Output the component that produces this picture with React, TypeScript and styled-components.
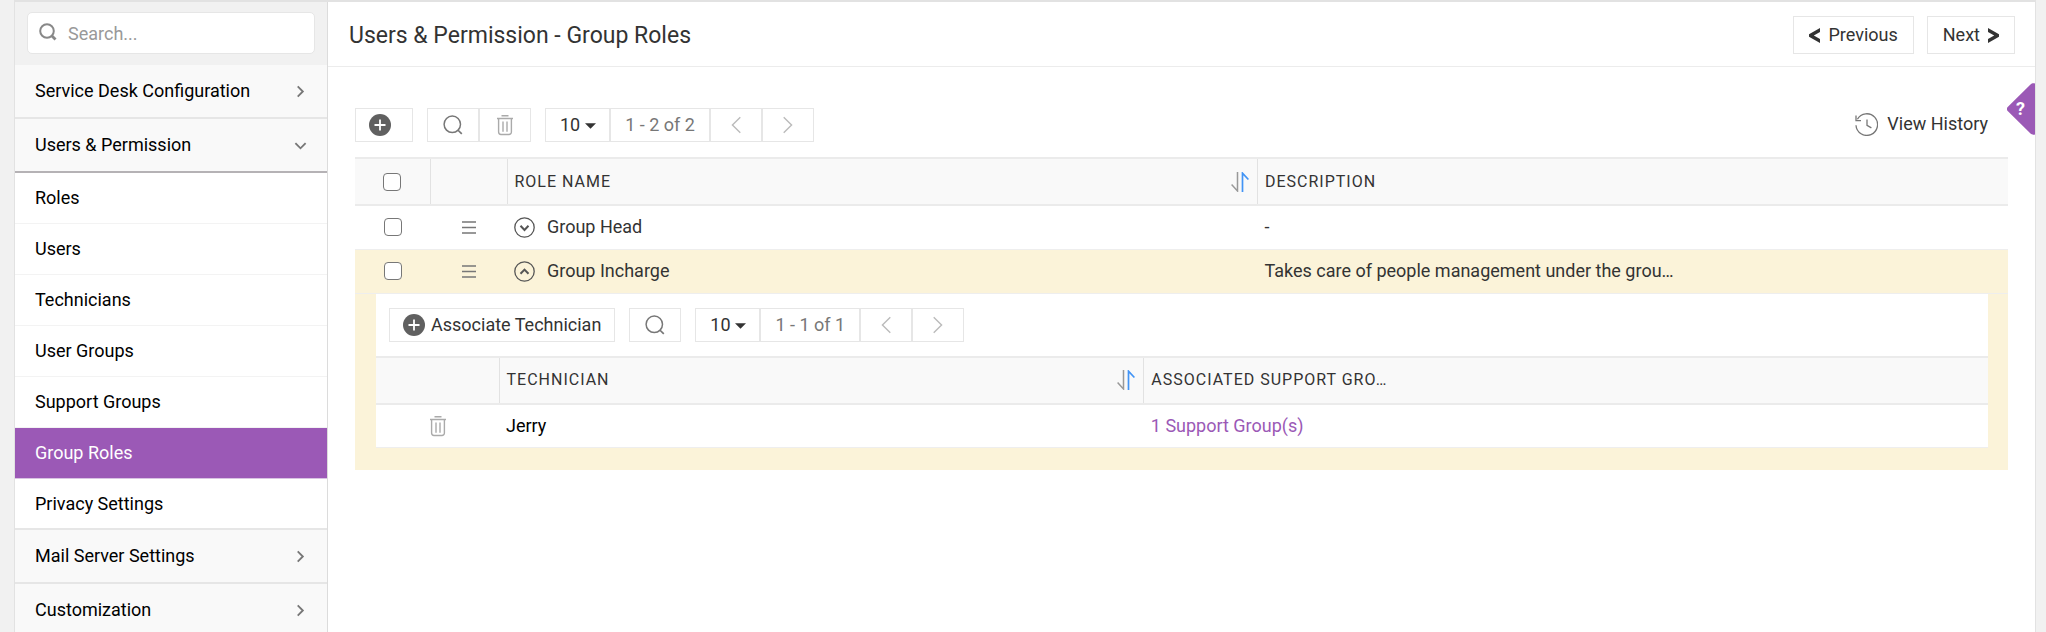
import React from "react";
import styled, { createGlobalStyle, css } from "styled-components";

const color = {
  gutter: "#f1f1f1",
  line: "#e6e6e6",
  soft: "#f9f9f9",
  text: "#333",
  muted: "#777",
  accent: "#9b59b6",
  highlight: "#fbf3d9",
};

const GlobalStyle = createGlobalStyle`
  *, *::before, *::after { box-sizing: border-box; }
  body {
    margin: 0;
    overflow: hidden;
    background: ${color.gutter};
    color: ${color.text};
    font-family: Roboto, "Liberation Sans", sans-serif;
    font-size: 18px;
    line-height: 20px;
    -webkit-font-smoothing: antialiased;
  }
  button, input, select { font: inherit; color: inherit; }
  svg { display: block; flex: none; }
  a { text-decoration: none; }
`;

const Shell = styled.div`
  position: relative;
  display: flex;
  height: 100vh;
  margin: 0 10px 0 14px;
  border: solid #e2e2e2;
  border-width: 2px 1px 0;
  background: #fff;
`;

/* ---------- sidebar ---------- */

const Sidebar = styled.nav`
  flex: none;
  width: 313px;
  overflow: hidden;
  border-right: 1px solid #dcdcdc;
`;

const SearchArea = styled.div`
  padding: 10px 12px 11px;
  background: ${color.gutter};
`;

const SearchBox = styled.label`
  display: flex;
  align-items: center;
  gap: 11px;
  height: 42px;
  padding: 0 11px;
  border: 1px solid ${color.line};
  border-radius: 5px;
  background: #fff;
`;

const SearchInput = styled.input`
  flex: 1;
  min-width: 0;
  padding: 2px 0 0;
  border: 0;
  outline: 0;
  background: none;
  &::placeholder { color: #999; opacity: 1; }
`;

const GroupButton = styled.button<{ $open?: boolean }>`
  display: flex;
  align-items: center;
  justify-content: space-between;
  width: 100%;
  height: 54px;
  padding: 0 20px;
  border: 0;
  border-bottom: 2px solid ${(p) => (p.$open ? "#b5b2b5" : color.line)};
  background: ${color.soft};
  color: #000;
  text-align: left;
`;

const SubList = styled.ul`
  margin: 0;
  padding: 0;
  list-style: none;
`;

const SubLink = styled.a<{ $active?: boolean }>`
  display: flex;
  align-items: center;
  height: 51px;
  padding: 0 20px;
  border-bottom: 1px solid #f3f3f3;
  color: #000;
  ${(p) =>
    p.$active &&
    css`
      border-color: #d9c3e3;
      background: ${color.accent};
      color: #fff;
    `}
  li:last-child > & { border-bottom: 2px solid ${color.line}; }
`;

/* ---------- main ---------- */

const Main = styled.main`
  flex: 1;
  min-width: 0;
`;

const Header = styled.header`
  display: flex;
  align-items: center;
  justify-content: space-between;
  height: 65px;
  padding: 2px 20px 0 21px;
  border-bottom: 1px solid #ececec;
`;

const Title = styled.h1`
  margin: 0;
  padding-top: 2px;
  font-size: 23px;
  line-height: 28px;
  font-weight: 400;
`;

const HeaderActions = styled.div`
  display: flex;
  gap: 13px;
`;

const NavButton = styled.button`
  display: flex;
  align-items: center;
  gap: 8px;
  height: 38px;
  padding: 0 15px;
  border: 1px solid ${color.line};
  background: #fff;
`;

const Content = styled.div`
  padding: 41px 27px 0 27px;
`;

const Toolbar = styled.div<{ $inset?: boolean }>`
  display: flex;
  align-items: center;
  gap: 14px;
  padding: ${(p) => (p.$inset ? "14px 13px" : "0 0 15px")};
`;

const Spacer = styled.div`
  flex: 1;
`;

const ToolGroup = styled.div`
  display: flex;
  & > * + * { border-left-width: 0; }
`;

const cell = css`
  height: 34px;
  border: 1px solid ${color.line};
  background: #fff;
`;

const ToolButton = styled.button<{ $faint?: boolean }>`
  ${cell}
  display: flex;
  align-items: center;
  justify-content: center;
  width: 52px;
  padding: 0;
  color: ${(p) => (p.$faint ? "#bbb" : "#666")};
`;

const AddButton = styled.button`
  ${cell}
  display: flex;
  align-items: center;
  gap: 6px;
  min-width: 58px;
  padding: 0 13px;
`;

const PageSize = styled.div`
  ${cell}
  display: grid;
  align-items: center;
  width: 65px;
  & > * { grid-area: 1 / 1; }
  & > svg { justify-self: end; margin: 2px 13px 0 0; pointer-events: none; }
`;

const PageSelect = styled.select`
  appearance: none;
  width: 100%;
  height: 32px;
  padding: 0 14px;
  border: 0;
  outline: 0;
  background: none;
`;

const PageRange = styled.div`
  ${cell}
  display: flex;
  align-items: center;
  justify-content: center;
  width: 100px;
  color: ${color.muted};
`;

const HistoryButton = styled.button`
  display: flex;
  align-items: center;
  gap: 9px;
  margin-right: 20px;
  padding: 0 0 2px;
  border: 0;
  background: none;
`;

const Table = styled.table`
  width: 100%;
  table-layout: fixed;
  border-collapse: collapse;
`;

const Th = styled.th`
  height: 47px;
  padding: 0 8px 0 7px;
  border-top: 2px solid #ebebeb;
  border-bottom: 2px solid #ebebeb;
  background: ${color.soft};
  font-size: 16px;
  font-weight: 400;
  letter-spacing: 1px;
  text-align: left;
  text-transform: uppercase;
  & + & { border-left: 1px solid #e2e2e2; }
`;

const SortHead = styled.div`
  display: flex;
  align-items: center;
  justify-content: space-between;
`;

const Row = styled.tr<{ $selected?: boolean }>`
  background: ${(p) => (p.$selected ? color.highlight : "#fff")};
`;

const Td = styled.td<{ $strong?: boolean }>`
  height: 44px;
  padding: 0 7px;
  border-bottom: 1px solid #eee;
  ${(p) => p.$strong && css`color: #000;`}
`;

const Centered = styled.div`
  display: flex;
  align-items: center;
  justify-content: center;
  color: #888;
`;

const Check = styled.input`
  appearance: none;
  width: 18px;
  height: 18px;
  margin: 0;
  border: 1px solid #777;
  border-radius: 4px;
  background: #fff;
`;

const RoleName = styled.div`
  display: flex;
  align-items: center;
  gap: 12px;
`;

const IconButton = styled.button`
  display: flex;
  padding: 0;
  border: 0;
  background: none;
`;

const NestedCell = styled.td`
  padding: 0 20px 22px 21px;
`;

const NestedPanel = styled.section`
  background: #fff;
`;

const AccentLink = styled.a`
  color: ${color.accent};
`;

const HelpTab = styled.button`
  position: absolute;
  top: 81px;
  right: 0;
  padding: 0;
  border: 0;
  background: none;
`;

const HelpFace = styled.span`
  display: grid;
  align-items: center;
  & > * { grid-area: 1 / 1; }
`;

const HelpMark = styled.span`
  padding: 0 0 0 9px;
  color: #fff;
  font-size: 18px;
  font-weight: 700;
  text-align: left;
`;

/* ---------- icons ---------- */

const Chevron = ({ dir = "right", size = 13, stroke = 2 }: { dir?: "right" | "left" | "down"; size?: number; stroke?: number }) => {
  const d = { right: "M4 1.5 9.5 7 4 12.5", left: "M10 1.5 4.5 7 10 12.5", down: "M1.5 4.5 7 10 12.5 4.5" }[dir];
  return (
    <svg width={size} height={size} viewBox="0 0 14 14" fill="none" stroke="currentColor" strokeWidth={stroke} aria-hidden>
      <path d={d} />
    </svg>
  );
};

const SideChevron = styled.span`
  display: flex;
  color: #777;
`;

const FieldSearchIcon = () => (
  <svg width="18" height="20" viewBox="0 0 18 20" fill="none" stroke="#888" aria-hidden>
    <circle cx="8" cy="8" r="6.8" strokeWidth="2" />
    <path d="m12.5 12.5 4 4" strokeWidth="2.8" />
  </svg>
);

const SearchIcon = () => (
  <svg width="20" height="20" viewBox="0 0 20 20" fill="none" stroke="#777" strokeWidth="1.5" aria-hidden>
    <circle cx="9.3" cy="9.3" r="8.2" />
    <path d="m14.8 15 4 3.8" strokeWidth="1.7" />
  </svg>
);

const TrashIcon = () => (
  <svg width="18" height="22" viewBox="0 0 18 22" fill="none" stroke="#aaa" strokeWidth="1.4" aria-hidden>
    <path d="M5.5 1.7h7M1 4.5h16M2.6 4.5v13.6a2.4 2.4 0 0 0 2.4 2.4h8a2.4 2.4 0 0 0 2.4-2.4V4.5M7 7.5v10.3M11 7.5v10.3" />
  </svg>
);

const PlusIcon = () => (
  <svg width="22" height="22" viewBox="0 0 22 22" aria-hidden>
    <circle cx="11" cy="11" r="11" fill="#606060" />
    <path d="M11 5.5v11M5.5 11h11" stroke="#fff" strokeWidth="1.8" />
  </svg>
);

const CaretIcon = () => (
  <svg width="11" height="6" viewBox="0 0 11 6" aria-hidden>
    <path d="M0 .3h11L5.5 5.8z" fill="#333" />
  </svg>
);

const SortIcon = () => (
  <svg width="18" height="20" viewBox="0 0 18 20" fill="none" aria-hidden>
    <path d="M6.5 0v19L.6 12.6" stroke="#999" strokeWidth="1.5" />
    <path d="M11.5 20V1.2l5.9 6.3" stroke="#4294f5" strokeWidth="1.7" />
  </svg>
);

const DragIcon = () => (
  <svg width="14" height="13" viewBox="0 0 14 13" stroke="#777" strokeWidth="1.3" aria-hidden>
    <path d="M0 1h14M0 6.5h14M0 12h14" />
  </svg>
);

const ExpandIcon = ({ open }: { open?: boolean }) => (
  <svg width="21" height="21" viewBox="0 0 21 21" fill="none" stroke="#555" aria-hidden>
    <circle cx="10.5" cy="10.5" r="9.7" strokeWidth="1.3" />
    <path d={open ? "m6.5 12.8 4-4.2 4 4.2" : "m6.5 8.8 4 4.2 4-4.2"} strokeWidth="2" />
  </svg>
);

const HistoryIcon = () => (
  <svg width="23" height="24" viewBox="0 0 23 24" fill="none" stroke="#777" strokeWidth="1.3" aria-hidden>
    <path d="M2.4 7.2A10.8 10.8 0 1 1 1 13.2" />
    <path d="M1 3.6v5h5M12 7.5v5.8l4.4 2.6" />
  </svg>
);

const BoldArrow = ({ left }: { left?: boolean }) => (
  <svg width="11" height="15" viewBox="0 0 11 15" fill="#333" aria-hidden>
    <path d={left ? "M11 0v4L4.8 7.5 11 11v4L0 8.8V6.2z" : "M0 0v4l6.2 3.5L0 11v4l11-6.2V6.2z"} />
  </svg>
);

const HelpShape = () => (
  <svg width="28" height="52" viewBox="0 0 28 52" aria-hidden>
    <path d="M28 .5v51c-2 .5-3.4 0-4.5-1L1.2 28.6a3.6 3.6 0 0 1 0-5.2L23.5 1.5C24.6.5 26 0 28 .5z" fill={color.accent} />
  </svg>
);

/* ---------- page ---------- */

const subItems = ["Roles", "Users", "Technicians", "User Groups", "Support Groups", "Group Roles", "Privacy Settings"];

const NavGroup = ({ label, open }: { label: string; open?: boolean }) => (
  <GroupButton type="button" $open={open} aria-expanded={!!open}>
    {label}
    <SideChevron>
      <Chevron dir={open ? "down" : "right"} />
    </SideChevron>
  </GroupButton>
);

const Pager = ({ range }: { range: string }) => (
  <ToolGroup>
    <PageSize>
      <PageSelect aria-label="Rows per page" defaultValue="10">
        <option>10</option>
        <option>25</option>
        <option>50</option>
      </PageSelect>
      <CaretIcon />
    </PageSize>
    <PageRange>{range}</PageRange>
    <ToolButton type="button" $faint aria-label="Previous page">
      <Chevron dir="left" size={20} stroke={1} />
    </ToolButton>
    <ToolButton type="button" $faint aria-label="Next page">
      <Chevron size={20} stroke={1} />
    </ToolButton>
  </ToolGroup>
);

const RoleRow = ({ name, description, open }: { name: string; description: string; open?: boolean }) => (
  <Row $selected={open}>
    <Td>
      <Centered>
        <Check type="checkbox" aria-label={`Select ${name}`} />
      </Centered>
    </Td>
    <Td>
      <Centered>
        <DragIcon />
      </Centered>
    </Td>
    <Td>
      <RoleName>
        <IconButton type="button" aria-expanded={!!open} aria-label={`Technicians in ${name}`}>
          <ExpandIcon open={open} />
        </IconButton>
        {name}
      </RoleName>
    </Td>
    <Td>{description}</Td>
  </Row>
);

const TechnicianPanel = () => (
  <NestedPanel>
    <Toolbar $inset>
      <AddButton type="button">
        <PlusIcon />
        Associate Technician
      </AddButton>
      <ToolButton type="button" aria-label="Search technicians">
        <SearchIcon />
      </ToolButton>
      <Pager range="1 - 1 of 1" />
    </Toolbar>
    <Table>
      <colgroup>
        <col style={{ width: 123 }} />
        <col style={{ width: "40%" }} />
        <col />
      </colgroup>
      <thead>
        <tr>
          <Th aria-label="Actions" />
          <Th>
            <SortHead>
              Technician
              <SortIcon />
            </SortHead>
          </Th>
          <Th>Associated Support Gro…</Th>
        </tr>
      </thead>
      <tbody>
        <Row>
          <Td>
            <Centered>
              <IconButton type="button" aria-label="Remove Jerry">
                <TrashIcon />
              </IconButton>
            </Centered>
          </Td>
          <Td $strong>Jerry</Td>
          <Td>
            <AccentLink href="#support-groups">1 Support Group(s)</AccentLink>
          </Td>
        </Row>
      </tbody>
    </Table>
  </NestedPanel>
);

export default function App() {
  return (
    <>
      <GlobalStyle />
      <Shell>
        <Sidebar>
          <SearchArea>
            <SearchBox>
              <FieldSearchIcon />
              <SearchInput type="text" placeholder="Search..." aria-label="Search settings" />
            </SearchBox>
          </SearchArea>
          <NavGroup label="Service Desk Configuration" />
          <NavGroup label="Users & Permission" open />
          <SubList>
            {subItems.map((item) => (
              <li key={item}>
                <SubLink href="#" $active={item === "Group Roles"}>
                  {item}
                </SubLink>
              </li>
            ))}
          </SubList>
          <NavGroup label="Mail Server Settings" />
          <NavGroup label="Customization" />
        </Sidebar>
        <Main>
          <Header>
            <Title>Users &amp; Permission - Group Roles</Title>
            <HeaderActions>
              <NavButton type="button">
                <BoldArrow left />
                Previous
              </NavButton>
              <NavButton type="button">
                Next
                <BoldArrow />
              </NavButton>
            </HeaderActions>
          </Header>
          <Content>
            <Toolbar>
              <AddButton type="button" aria-label="Add role">
                <PlusIcon />
              </AddButton>
              <ToolGroup>
                <ToolButton type="button" aria-label="Search roles">
                  <SearchIcon />
                </ToolButton>
                <ToolButton type="button" aria-label="Delete roles">
                  <TrashIcon />
                </ToolButton>
              </ToolGroup>
              <Pager range="1 - 2 of 2" />
              <Spacer />
              <HistoryButton type="button">
                <HistoryIcon />
                View History
              </HistoryButton>
            </Toolbar>
            <Table>
              <colgroup>
                <col style={{ width: 75 }} />
                <col style={{ width: 77 }} />
                <col />
                <col />
              </colgroup>
              <thead>
                <tr>
                  <Th>
                    <Centered>
                      <Check type="checkbox" aria-label="Select all roles" />
                    </Centered>
                  </Th>
                  <Th aria-label="Reorder" />
                  <Th>
                    <SortHead>
                      Role Name
                      <SortIcon />
                    </SortHead>
                  </Th>
                  <Th>Description</Th>
                </tr>
              </thead>
              <tbody>
                <RoleRow name="Group Head" description="-" />
                <RoleRow name="Group Incharge" description="Takes care of people management under the grou…" open />
                <Row $selected>
                  <NestedCell colSpan={4}>
                    <TechnicianPanel />
                  </NestedCell>
                </Row>
              </tbody>
            </Table>
          </Content>
        </Main>
        <HelpTab type="button" aria-label="Help">
          <HelpFace>
            <HelpShape />
            <HelpMark>?</HelpMark>
          </HelpFace>
        </HelpTab>
      </Shell>
    </>
  );
}
